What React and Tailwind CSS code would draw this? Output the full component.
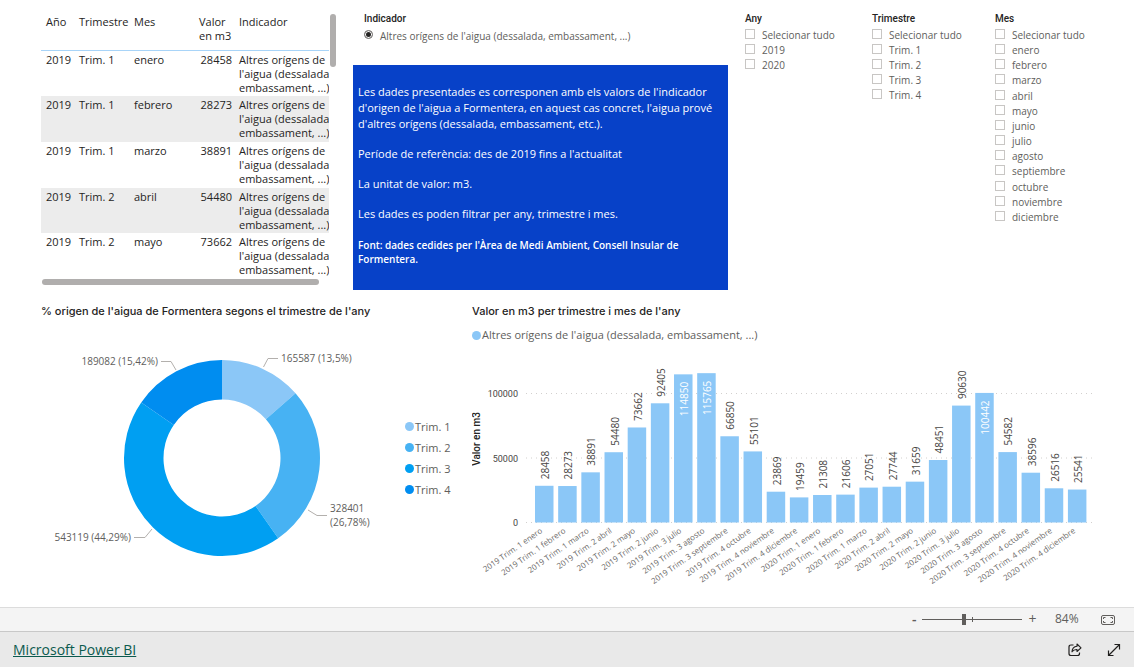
import React from 'react';

const FILAS = [
  { any: 2019, trimestre: 'Trim. 1', mes: 'enero', valor: 28458 },
  { any: 2019, trimestre: 'Trim. 1', mes: 'febrero', valor: 28273 },
  { any: 2019, trimestre: 'Trim. 1', mes: 'marzo', valor: 38891 },
  { any: 2019, trimestre: 'Trim. 2', mes: 'abril', valor: 54480 },
  { any: 2019, trimestre: 'Trim. 2', mes: 'mayo', valor: 73662 },
  { any: 2019, trimestre: 'Trim. 2', mes: 'junio', valor: 92405 },
  { any: 2019, trimestre: 'Trim. 3', mes: 'julio', valor: 114850 },
  { any: 2019, trimestre: 'Trim. 3', mes: 'agosto', valor: 115765 },
  { any: 2019, trimestre: 'Trim. 3', mes: 'septiembre', valor: 66850 },
  { any: 2019, trimestre: 'Trim. 4', mes: 'octubre', valor: 55101 },
  { any: 2019, trimestre: 'Trim. 4', mes: 'noviembre', valor: 23869 },
  { any: 2019, trimestre: 'Trim. 4', mes: 'diciembre', valor: 19459 },
  { any: 2020, trimestre: 'Trim. 1', mes: 'enero', valor: 21308 },
  { any: 2020, trimestre: 'Trim. 1', mes: 'febrero', valor: 21606 },
  { any: 2020, trimestre: 'Trim. 1', mes: 'marzo', valor: 27051 },
  { any: 2020, trimestre: 'Trim. 2', mes: 'abril', valor: 27744 },
  { any: 2020, trimestre: 'Trim. 2', mes: 'mayo', valor: 31659 },
  { any: 2020, trimestre: 'Trim. 2', mes: 'junio', valor: 48451 },
  { any: 2020, trimestre: 'Trim. 3', mes: 'julio', valor: 90630 },
  { any: 2020, trimestre: 'Trim. 3', mes: 'agosto', valor: 100442 },
  { any: 2020, trimestre: 'Trim. 3', mes: 'septiembre', valor: 54582 },
  { any: 2020, trimestre: 'Trim. 4', mes: 'octubre', valor: 38596 },
  { any: 2020, trimestre: 'Trim. 4', mes: 'noviembre', valor: 26516 },
  { any: 2020, trimestre: 'Trim. 4', mes: 'diciembre', valor: 25541 },
];

const TRIMESTRES = [
  { nom: 'Trim. 1', total: 165587, color: '#8bc7f7' },
  { nom: 'Trim. 2', total: 328401, color: '#47b2f3' },
  { nom: 'Trim. 3', total: 543119, color: '#009ff2' },
  { nom: 'Trim. 4', total: 189082, color: '#008df0' },
];

const MESES = [
  'enero', 'febrero', 'marzo', 'abril', 'mayo', 'junio',
  'julio', 'agosto', 'septiembre', 'octubre', 'noviembre', 'diciembre',
];

const INDICADOR = "Altres orígens de l'aigua (dessalada, embassament, ...)";

const Taula = () => (
  <div className="pt-[14px] pr-[17px]">
    <div className="flex gap-px">
      <div className="h-[264px] min-w-0 flex-1 overflow-hidden">
        <table className="h-[265px] w-[306px] table-fixed text-left text-[11px] leading-[14px] text-[#252423]">
          <thead>
            <tr className="h-9 align-top">
              <th className="w-[33px] border-b border-[#a8d4f8] pl-[5px] pt-px font-normal">Año</th>
              <th className="w-[55px] border-b border-[#a8d4f8] pl-[5px] pt-px font-normal">Trimestre</th>
              <th className="w-[65px] border-b border-[#a8d4f8] pl-[5px] pt-px font-normal">Mes</th>
              <th className="w-[42px] border-b border-[#a8d4f8] pl-[5px] pt-px font-normal">Valor en m3</th>
              <th className="border-b border-[#a8d4f8] pl-[3px] pt-px font-normal">Indicador</th>
            </tr>
          </thead>
          <tbody>
            {FILAS.slice(0, 5).map((fila) => (
              <tr key={fila.mes} className="align-top even:bg-[#ececec]">
                <td className="pl-[5px] pt-[2px]">{fila.any}</td>
                <td className="pl-[5px] pt-[2px]">{fila.trimestre}</td>
                <td className="pl-[5px] pt-[2px]">{fila.mes}</td>
                <td className="pr-1 pt-[2px] text-right">{fila.valor}</td>
                <td className="pl-[3px] pt-[2px]">{INDICADOR}</td>
              </tr>
            ))}
          </tbody>
        </table>
      </div>
      <div className="h-[53px] w-[6px] rounded-full bg-[#b0aead]" />
    </div>
    <div className="mt-px ml-px mr-[17px] h-[6px] rounded-full bg-[#b0aead]" />
  </div>
);

const Filtre = ({ titol, opcions, alt }) => (
  <fieldset className="min-w-0 pt-3">
    <legend className="float-left w-full font-['Roboto',sans-serif] text-[10px] font-medium leading-[14px] text-[#252423]">
      {titol}
    </legend>
    <ul className={`clear-both grid pt-px text-[10px] text-[#605e5c] ${alt ? 'h-[198px]' : ''}`}>
      {['Selecionar tudo', ...opcions].map((opcio) => (
        <li key={opcio}>
          <label className="flex items-start gap-[7px] pt-px leading-[14px]">
            <input type="checkbox" className="mt-px size-[10px] shrink-0 appearance-none border border-[#c8c6c4] bg-white checked:bg-[#605e5c]" />
            {opcio}
          </label>
        </li>
      ))}
    </ul>
  </fieldset>
);

// Punt sobre un cercle, angle en fracció de volta des de dalt
const punt = (r, t) => {
  const a = t * 2 * Math.PI;
  return `${181 + r * Math.sin(a)} ${128 - r * Math.cos(a)}`;
};

const Donut = () => {
  const suma = TRIMESTRES.reduce((s, t) => s + t.total, 0);
  let inici = 0;
  const sectors = TRIMESTRES.map((t) => {
    const a = inici;
    const b = inici + t.total / suma;
    inici = b;
    const gran = b - a > 0.5 ? 1 : 0;
    return {
      ...t,
      d: `M${punt(98, a)} A98 98 0 ${gran} 1 ${punt(98, b)} L${punt(58.5, b)} A58.5 58.5 0 ${gran} 0 ${punt(58.5, a)}Z`,
    };
  });

  return (
    <svg viewBox="0 0 364 270" className="min-w-0 flex-1 text-[10px]" role="img" aria-label="Origen de l'aigua per trimestre">
      {sectors.map((s) => (
        <path key={s.nom} d={s.d} fill={s.color} />
      ))}
      <g fill="none" stroke="#b3b0ad">
        <path d="M222.500 37 L227 28.500 H237" />
        <path d="M135 40 L130 31.500 H120" />
        <path d="M267 180 L276 185.500 H286" />
        <path d="M111 199 L104 207.500 H93" />
      </g>
      <g fill="#605e5c">
        <text x="240" y="32">165587 (13,5%)</text>
        <text x="117" y="35" textAnchor="end">189082 (15,42%)</text>
        <text x="289" y="182">328401</text>
        <text x="289" y="196">(26,78%)</text>
        <text x="90" y="211" textAnchor="end">543119 (44,29%)</text>
      </g>
    </svg>
  );
};

const BASE = 172;
const ESCALA = 129 / 100000;

const Barres = () => (
  <svg viewBox="0 0 662 250" className="block w-full text-[10px]" role="img" aria-label="Valor en m3 per trimestre i mes">
    {[0, 50000, 100000].map((v) => (
      <g key={v}>
        <line x1="54" x2="622" y1={BASE + 0.5 - v * ESCALA} y2={BASE + 0.5 - v * ESCALA} stroke="#d2d0ce" strokeDasharray="1 4" />
        <text x="46" y={BASE + 4 - v * ESCALA} textAnchor="end" fill="#484644" className="font-['Roboto',sans-serif] text-[9px]">{v}</text>
      </g>
    ))}
    <text transform="translate(8 89) rotate(-90)" textAnchor="middle" fill="#252423" className="font-['Roboto',sans-serif] font-medium">Valor en m3</text>
    {FILAS.map((fila, i) => {
      const x = 63 + i * 23.17;
      const alt = fila.valor * ESCALA;
      const dins = fila.valor > 100000;
      return (
        <g key={i}>
          <rect x={x} y={BASE + 0.5 - alt} width="18.5" height={alt} fill="#8bc7f7" />
          <text
            transform={`translate(${x + 14} ${dins ? BASE - alt + 8 : BASE - alt - 6}) rotate(-90)`}
            textAnchor={dins ? 'end' : 'start'}
            fill={dins ? '#ffffff' : '#484644'}
          >
            {fila.valor}
          </text>
          <text transform={`translate(${x + 8} ${BASE + 10}) rotate(-35)`} textAnchor="end" fill="#6b6967" className="text-[8px]">
            {fila.any} {fila.trimestre} {fila.mes}
          </text>
        </g>
      );
    })}
  </svg>
);

const App = () => {
  return (
    <div className="flex min-h-screen flex-col bg-white font-['Open_Sans','Noto_Sans',sans-serif]">
      <main className="flex-1 pl-[41px]">
        {/* Taula, indicador i filtres */}
        <div className="grid h-[304px] grid-cols-[minmax(0,312fr)_minmax(0,392fr)_minmax(0,127fr)_minmax(0,123fr)_minmax(0,139fr)]">
          <Taula />
          <div className="pr-[17px] pt-3">
            <fieldset className="h-[53px] pl-[11px] text-[10px] leading-[14px]">
              <legend className="float-left w-full font-['Roboto',sans-serif] font-medium text-[#252423]">Indicador</legend>
              <label className="clear-both flex items-start gap-[7px] pt-[3px] text-[#605e5c]">
                <input
                  type="radio"
                  name="indicador"
                  defaultChecked
                  className="mt-px size-[9px] shrink-0 appearance-none rounded-full border border-[#8a8886] bg-white checked:bg-[#252423] checked:shadow-[inset_0_0_0_1px_white]"
                />
                {INDICADOR}
              </label>
            </fieldset>
            <div className="h-[225px] bg-[#0741c8] px-[5px] pt-[19px] text-[11px] leading-4 text-white">
              <p>
                Les dades presentades es corresponen amb els valors de l'indicador d'origen de l'aigua a
                Formentera, en aquest cas concret, l'aigua prové d'altres orígens (dessalada, embassament, etc.).
              </p>
              <p className="mt-[14px]">Període de referència: des de 2019 fins a l'actualitat</p>
              <p className="mt-[14px]">La unitat de valor: m3.</p>
              <p className="mt-[14px]">Les dades es poden filtrar per any, trimestre i mes.</p>
              <p className="mt-4 text-[10px] font-semibold leading-[14px]">
                Font: dades cedides per l'Àrea de Medi Ambient, Consell Insular de <br />
                Formentera.
              </p>
            </div>
          </div>
          <Filtre titol="Any" opcions={['2019', '2020']} />
          <Filtre titol="Trimestre" opcions={TRIMESTRES.map((t) => t.nom)} />
          <Filtre titol="Mes" opcions={MESES} alt />
        </div>

        {/* Gràfics */}
        <div className="grid grid-cols-[minmax(0,431fr)_minmax(0,662fr)]">
          <section>
            <h2 className="font-['Inter',sans-serif] text-[11px] font-medium leading-[14px] text-[#252423]">
              % origen de l'aigua de Formentera segons el trimestre de l'any
            </h2>
            <div className="flex items-center pt-3">
              <Donut />
              <ul className="w-[67px] pb-[14px] text-[11px] leading-[21px] text-[#605e5c]">
                <li className="flex items-center gap-px"><span className="size-[9px] rounded-full bg-[#8bc7f7]" />Trim. 1</li>
                <li className="flex items-center gap-px"><span className="size-[9px] rounded-full bg-[#47b2f3]" />Trim. 2</li>
                <li className="flex items-center gap-px"><span className="size-[9px] rounded-full bg-[#009ff2]" />Trim. 3</li>
                <li className="flex items-center gap-px"><span className="size-[9px] rounded-full bg-[#008df0]" />Trim. 4</li>
              </ul>
            </div>
          </section>
          <section>
            <h2 className="font-['Inter',sans-serif] text-[11px] font-medium leading-[14px] text-[#252423]">
              Valor en m3 per trimestre i mes de l'any
            </h2>
            <p className="flex items-center gap-px pt-[10px] text-[11px] leading-[14px] text-[#605e5c]">
              <span className="size-[9px] rounded-full bg-[#8bc7f7]" />
              {INDICADOR}
            </p>
            <div className="pt-2">
              <Barres />
            </div>
          </section>
        </div>
      </main>

      {/* Barra de zoom */}
      <div className="flex h-6 items-center justify-end border-t border-[#dcdcdc] bg-[#f4f4f4] pr-[19px] text-[12px] text-[#605e5c]">
        <button type="button" aria-label="Allunya" className="w-[10px] pb-[2px] text-left text-[14px] font-semibold leading-4">-</button>
        <div className="relative flex h-3 w-[100px] items-center">
          <div className="absolute left-1/2 h-[5px] w-px bg-[#605e5c]" />
          <input
            type="range"
            min="0"
            max="200"
            defaultValue="84"
            aria-label="Zoom"
            className="h-px w-full appearance-none bg-[#605e5c] [&::-webkit-slider-thumb]:h-[11px] [&::-webkit-slider-thumb]:w-1 [&::-webkit-slider-thumb]:appearance-none [&::-webkit-slider-thumb]:bg-[#605e5c]"
          />
        </div>
        <button type="button" aria-label="Apropa" className="ml-[6px] w-[9px] pb-[2px] text-[14px] leading-4">+</button>
        <button type="button" className="ml-[18px] w-[26px] pb-px text-left leading-4">84%</button>
        <button type="button" aria-label="Ajusta a la pàgina" className="ml-5">
          <svg viewBox="0 0 14 10" className="h-[10px] w-[14px]" fill="none" stroke="#605e5c">
            <rect x="0.500" y="0.500" width="13" height="9" rx="1.500" />
            <path d="M2.500 4V2.500H4.500M9.500 2.500H11.500V4M11.500 6V7.500H9.500M4.500 7.500H2.500V6" />
          </svg>
        </button>
      </div>

      <footer className="flex h-9 items-center justify-between border-t border-[#c8c8c8] bg-[#e9e9e9] pl-[13px] pr-[13px]">
        <a href="#" className="pt-px text-[14px] leading-5 text-[#0b5a4e] underline">Microsoft Power BI</a>
        <div className="flex items-center gap-[25px]">
          <button type="button" aria-label="Comparteix">
            <svg viewBox="0 0 14 14" className="size-[14px]" fill="none" stroke="#201f1e" strokeLinejoin="round">
              <path d="M5.500 2H3Q1 2 1 4V10.500Q1 12.500 3 12.500H9.500Q11.500 12.500 11.500 10.500V9.500" strokeWidth="1.200" />
              <path d="M9 1L13 4.800L9 8.500V6.500Q5.800 6.300 4 8.800Q4.300 3.600 9 3.200Z" strokeWidth="1.100" />
            </svg>
          </button>
          <button type="button" aria-label="Pantalla completa">
            <svg viewBox="0 0 14 14" className="size-[14px]" fill="none" stroke="#201f1e" strokeWidth="1.200">
              <path d="M1.500 12.500L12.500 1.500M7.500 1.500H12.500V6.500M1.500 7.500V12.500H6.500" />
            </svg>
          </button>
        </div>
      </footer>
    </div>
  );
};

export default App;
